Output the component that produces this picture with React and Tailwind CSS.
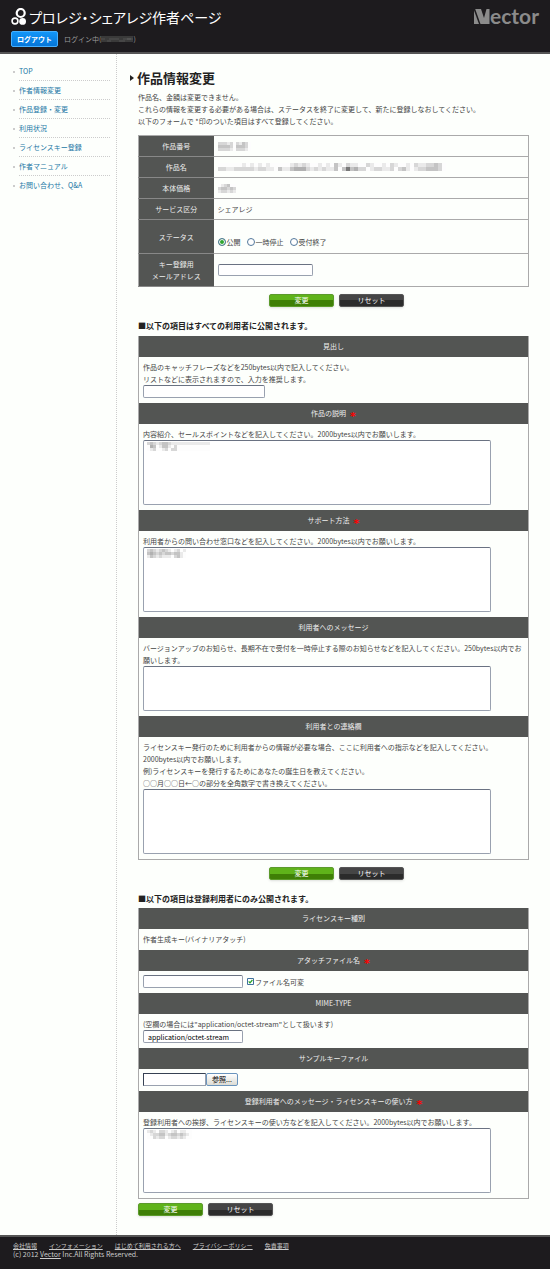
import { useRef, useState } from 'react'

const NAV = ['TOP', '作者情報変更', '作品登録・変更', '利用状況', 'ライセンスキー登録', '作者マニュアル', 'お問い合わせ、Q&A']

const FOOTER_LINKS = ['会社情報', 'インフォメーション', 'はじめて利用される方へ', 'プライバシーポリシー', '免責事項']

const STATUSES = ['公開', '一時停止', '受付終了']

// Grey levels of the masked values, one digit per block (0 = white, 9 = dark)
const MASKS = {
  id: ['22212021320', '33332033320', '22221022210'],
  title: [
    '000000101010100000121210010103102110021001021001021122320',
    '221122222122110311344421212113037342201221120231012233320',
  ],
  price: ['012300', '233232', '122121'],
  description: ['232123321111111111111', '043013310200000000000', '012001202200000000000'],
  support: ['2321232101201', '3432323323310', '1321211102310'],
  message: ['121022101201100', '012233123323210', '002122012212100'],
  login: ['3333333333333333', '4433444443344554', '3334433334443333'],
}

const field = 'block rounded-xs border border-gray-400 border-t-gray-500 bg-white px-1 leading-3 text-black'

function Mosaic({ rows, cell = 4, dark = false }) {
  const w = rows[0].length * cell
  const h = rows.length * cell
  return (
    <svg width={w} height={h} viewBox={`0 0 ${w} ${h}`} className="block" aria-hidden="true">
      {rows.map((row, y) =>
        [...row].map((level, x) => {
          const v = dark ? 22 + level * 12 : 253 - level * 19
          return <rect key={`${x}-${y}`} x={x * cell} y={y * cell} width={cell} height={cell} fill={`rgb(${v},${v},${v})`} />
        })
      )}
    </svg>
  )
}

function ServiceLogo() {
  return (
    <svg width="16" height="18" viewBox="0 0 16 18" fill="none" stroke="#fff" aria-hidden="true">
      <circle cx="9.7" cy="5" r="4" strokeWidth="2.2" />
      <circle cx="4" cy="13" r="2.9" strokeWidth="1.6" />
      <circle cx="11.6" cy="13.4" r="3.4" fill="#fff" stroke="none" />
    </svg>
  )
}

function VectorLogo() {
  return (
    <div className="flex items-start text-[#8b8b8b]">
      <svg width="16" height="17" viewBox="0 0 16 17" fill="currentColor" role="img" aria-label="V">
        <path d="M0 2.500L5 16H0Z" />
        <path d="M1.200 1H7L10 10L12.500 1H15.500V16H6.500Z" />
      </svg>
      <span className="font-[Lato] text-[21px] leading-4 font-bold">ector</span>
    </div>
  )
}

function Buttons({ className = 'justify-center pl-1.5' }) {
  const base = 'h-[13px] w-[65px] rounded-xs border bg-linear-to-b leading-none text-white shadow-sm'
  return (
    <div className={`flex gap-[5px] ${className}`}>
      <button type="submit" className={`${base} border-[#5c9a2c] from-[#5fb31a] from-50% to-[#3f7f06] to-50%`}>変更</button>
      <button type="reset" className={`${base} border-[#555] from-[#454545] from-50% to-[#2b2b2b] to-50%`}>リセット</button>
    </div>
  )
}

function Row({ label, children }) {
  return (
    <tr className="border border-[#aaa]">
      <th scope="row" className="w-[75px] border-b border-[#888] bg-[#535553] py-1 font-normal text-[#eee]">{label}</th>
      <td className="px-1">{children}</td>
    </tr>
  )
}

function Section({ id, title, required, children }) {
  return (
    <section>
      <h3 className="h-[21px] bg-[#535553] text-center leading-[21px] text-[#eee]">
        <label htmlFor={id}>{title}</label>
        {required && <span className="ml-1 inline-block align-[-4px] font-['DejaVu_Sans'] text-[11px] leading-none font-bold text-[#f00]">*</span>}
      </h3>
      <div className="px-1 pt-1 pb-[5px]">{children}</div>
    </section>
  )
}

function Area({ id, mask, className = 'h-[65px]' }) {
  return (
    <div className="relative">
      <textarea id={id} className={`${field} w-[348px] max-w-full resize-none ${className}`} />
      {mask && (
        <div className="absolute top-0.5 left-1">
          <Mosaic rows={mask} cell={3} />
        </div>
      )}
    </div>
  )
}

function Radio({ label, checked, onChange }) {
  return (
    <label className="flex items-center gap-px">
      <input
        type="radio"
        name="status"
        checked={checked}
        onChange={onChange}
        className="size-2 appearance-none rounded-full border border-[#53789c] bg-white checked:bg-[#2fa52f] checked:shadow-[inset_0_0_0_1px_#fff]"
      />
      {label}
    </label>
  )
}

function FilePicker() {
  const picker = useRef(null)
  const [name, setName] = useState('')
  return (
    <div className="flex">
      <input id="sample" readOnly value={name} className="h-[13px] w-[63px] border border-gray-400 border-t-gray-700 border-l-gray-700 bg-white" />
      <button
        type="button"
        onClick={() => picker.current.click()}
        className="h-[13px] w-8 rounded-xs border border-[#6a94bd] bg-linear-to-b from-white to-[#dcdcd4] leading-none text-black"
      >
        参照...
      </button>
      <input ref={picker} type="file" hidden onChange={(e) => setName(e.target.files[0]?.name ?? '')} />
    </div>
  )
}

export default function App() {
  const [status, setStatus] = useState('公開')

  return (
    <div className="flex min-h-screen flex-col bg-[#fdfffc] font-['Noto_Sans_CJK_JP','Liberation_Sans',sans-serif] text-[7px] leading-3 text-[#444]">
      <header className="flex h-[54px] items-start justify-between border-b-2 border-[#555] bg-[#1d1b1e] px-[11px] pt-2">
        <div>
          <h1 className="flex h-[18px] items-center gap-0.5 text-[14px] text-white [font-feature-settings:'palt']">
            <ServiceLogo />
            プロレジ・シェアレジ作者ページ
          </h1>
          <div className="mt-[5px] flex items-center text-[#999]">
            <button type="button" className="h-4 w-[47px] rounded-xs border border-[#45b0ff] bg-linear-to-b from-[#1296f8] to-[#0676d8] leading-none font-bold text-white">ログアウト</button>
            <span className="ml-1.5">ログイン中(</span>
            <Mosaic rows={MASKS.login} cell={2} dark />
            <span>)</span>
          </div>
        </div>
        <VectorLogo />
      </header>

      <div className="flex grow">
        <nav className="w-[117px] shrink-0 border-r border-dotted border-[#ccc] pt-2 pr-1.5 pl-[13px]">
          <ul>
            {NAV.map((item) => (
              <li key={item} className="flex h-[19px] items-center gap-1">
                <span className="size-0.5 bg-[#ccc]" />
                <a href="#" className="grow border-b border-dotted border-[#ccc] py-[3px] text-[#2277a5] in-[li:last-child]:border-transparent">{item}</a>
              </li>
            ))}
          </ul>
        </nav>

        <main className="min-w-0 grow px-[21px] pt-4 pb-4">
          <form onSubmit={(e) => e.preventDefault()}>
            <h2 className="-ml-2 flex items-center gap-[3px] text-[13px] leading-4 font-bold text-[#222]">
              <svg width="4" height="6" viewBox="0 0 4 6" aria-hidden="true"><path d="M0 0L4 3L0 6Z" fill="#222" /></svg>
              作品情報変更
            </h2>
            <p className="mt-[5px]">
              作品名、金額は変更できません。<br />
              これらの情報を変更する必要がある場合は、ステータスを終了に変更して、新たに登録しなおしてください。<br />
              以下のフォームで *印のついた項目はすべて登録してください。
            </p>

            <table className="mt-2 w-full border-collapse">
              <tbody>
                <Row label="作品番号"><Mosaic rows={MASKS.id} cell={3} /></Row>
                <Row label="作品名"><Mosaic rows={MASKS.title} cell={4} /></Row>
                <Row label="本体価格"><Mosaic rows={MASKS.price} cell={3} /></Row>
                <Row label="サービス区分">シェアレジ</Row>
                <tr className="h-[34px] border border-[#aaa]">
                  <th scope="row" className="border-b border-[#888] bg-[#535553] font-normal text-[#eee]">ステータス</th>
                  <td className="px-1 pt-2.5">
                    <div className="flex gap-1.5">
                      {STATUSES.map((s) => (
                        <Radio key={s} label={s} checked={status === s} onChange={() => setStatus(s)} />
                      ))}
                    </div>
                  </td>
                </tr>
                <Row label={<label htmlFor="mail">キー登録用<br />メールアドレス</label>}>
                  <input id="mail" type="text" className={`${field} h-3 w-[95px]`} />
                </Row>
              </tbody>
            </table>
            <div className="mt-[7px]"><Buttons /></div>

            <p className="mt-[13px] text-[8px] font-bold text-[#222]">■以下の項目はすべての利用者に公開されます。</p>
            <div className="mt-1 border border-t-0 border-[#aaa]">
              <Section id="catch" title="見出し">
                <p>作品のキャッチフレーズなどを250bytes以内で記入してください。<br />リストなどに表示されますので、入力を推奨します。</p>
                <input id="catch" type="text" className={`${field} h-[13px] w-[122px]`} />
              </Section>
              <Section id="description" title="作品の説明" required>
                <p>内容紹介、セールスポイントなどを記入してください。2000bytes以内でお願いします。</p>
                <Area id="description" mask={MASKS.description} />
              </Section>
              <Section id="support" title="サポート方法" required>
                <p>利用者からの問い合わせ窓口などを記入してください。2000bytes以内でお願いします。</p>
                <Area id="support" mask={MASKS.support} />
              </Section>
              <Section id="notice" title="利用者へのメッセージ">
                <p>バージョンアップのお知らせ、長期不在で受付を一時停止する際のお知らせなどを記入してください。250bytes以内でお願いします。</p>
                <Area id="notice" className="h-[45px]" />
              </Section>
              <Section id="contact" title="利用者との連絡欄">
                <p>
                  ライセンスキー発行のために利用者からの情報が必要な場合、ここに利用者への指示などを記入してください。<br />
                  2000bytes以内でお願いします。<br />
                  例)ライセンスキーを発行するためにあなたの誕生日を教えてください。<br />
                  ○○月○○日←○の部分を全角数字で書き換えてください。
                </p>
                <Area id="contact" />
              </Section>
            </div>
            <div className="mt-[7px]"><Buttons /></div>

            <p className="mt-[13px] text-[8px] font-bold text-[#222]">■以下の項目は登録利用者にのみ公開されます。</p>
            <div className="mt-[3px] border border-t-0 border-[#aaa]">
              <Section title="ライセンスキー種別">作者生成キー(バイナリアタッチ)</Section>
              <Section id="attach" title="アタッチファイル名" required>
                <div className="flex items-center gap-1">
                  <input id="attach" type="text" className={`${field} h-[13px] w-[100px]`} />
                  <label className="flex items-center gap-px">
                    <input type="checkbox" defaultChecked className="peer sr-only" />
                    <svg width="7" height="7" viewBox="0 0 7 7" aria-hidden="true" className="[&>.tick]:invisible peer-checked:[&>.tick]:visible">
                      <path d="M.5 .5H6.500V6.500H.5Z" fill="#fff" stroke="#41729d" />
                      <path className="tick" d="M1.700 3.300L3 4.800L5.400 2" fill="none" stroke="#21a121" strokeWidth="1.200" />
                    </svg>
                    ファイル名可変
                  </label>
                </div>
              </Section>
              <Section id="mime" title="MIME-TYPE">
                <p>(空欄の場合には"application/octet-stream"として扱います)</p>
                <input id="mime" type="text" defaultValue="application/octet-stream" className={`${field} h-[13px] w-[100px]`} />
              </Section>
              <Section id="sample" title="サンプルキーファイル"><FilePicker /></Section>
              <Section id="usage" title="登録利用者へのメッセージ・ライセンスキーの使い方" required>
                <p>登録利用者への挨拶、ライセンスキーの使い方などを記入してください。2000bytes以内でお願いします。</p>
                <Area id="usage" mask={MASKS.message} />
              </Section>
            </div>
            <div className="mt-1"><Buttons className="" /></div>
          </form>
        </main>
      </div>

      <footer className="h-[34px] border-t-2 border-[#555] bg-[#1d1b1e] px-[13px] pt-1 text-[6px] leading-[9px] text-[#ccc]">
        <ul className="flex gap-3">
          {FOOTER_LINKS.map((item) => (
            <li key={item}><a href="#" className="underline">{item}</a></li>
          ))}
        </ul>
        <p className="text-[7px]">(c) 2012 <a href="#" className="underline">Vector</a> Inc.All Rights Reserved.</p>
      </footer>
    </div>
  )
}
